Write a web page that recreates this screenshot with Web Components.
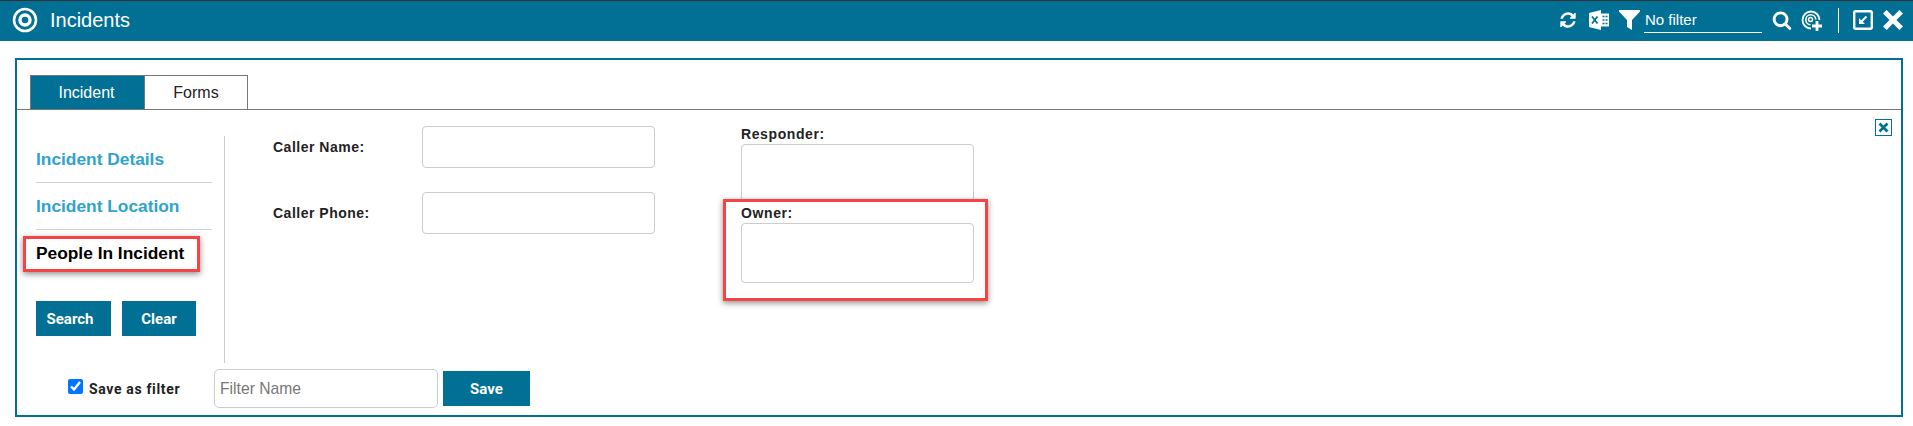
<!DOCTYPE html>
<html>
<head>
<meta charset="utf-8">
<title>Incidents</title>
<style>
html,body{margin:0;padding:0;background:#fff;}
body{font-family:"Liberation Sans",Arial,sans-serif;color:#222;overflow:hidden;}
</style>
</head>
<body>
<app-header title-text="Incidents" filter-text="No filter"></app-header>
<incident-panel>
  <tab-bar slot="tabs"></tab-bar>
  <side-nav slot="nav"></side-nav>
  <form-col slot="form-left">
    <inline-field label="Caller Name:"></inline-field>
    <inline-field label="Caller Phone:"></inline-field>
  </form-col>
  <stack-col slot="form-right"></stack-col>
  <save-row slot="footer"></save-row>
</incident-panel>

<script>
//shared colour for bars and buttons
var TEAL = "#026f94";

var icons = {
  target: `<svg width="26" height="26" viewBox="0 0 26 26" fill="none" stroke="#fff"><circle cx="13" cy="13" r="11" stroke-width="2.6"/><circle cx="13" cy="13" r="5" stroke-width="3.4"/></svg>`,
  sync: `<svg width="18" height="18" viewBox="0 0 1792 1792" fill="#fff"><path d="M1639 1056q0 5-1 7-64 268-268 434.500t-478 166.500q-146 0-282.500-55t-243.500-157l-129 129q-19 19-45 19t-45-19-19-45v-448q0-26 19-45t45-19h448q26 0 45 19t19 45-19 45l-137 137q71 66 161 102t187 36q134 0 250-65t186-179q11-17 53-117 8-23 30-23h192q13 0 22.500 9.500t9.500 22.500zm25-800v448q0 26-19 45t-45 19h-448q-26 0-45-19t-19-45 19-45l138-138q-148-137-349-137-134 0-250 65t-186 179q-11 17-53 117-8 23-30 23h-199q-13 0-22.500-9.500t-9.500-22.500v-7q65-268 270-434.500t480-166.500q146 0 284 55.500t245 156.500l130-129q19-19 45-19t45 19 19 45z"/></svg>`,
  excel: `<svg width="20" height="20" viewBox="0 0 20 20"><path d="M0 3 L12 0 V20 L0 17Z" fill="#fff"/><path d="M12 3.500H20V16.500H12Z" fill="#fff"/><path d="M3 6.500 L8.500 13.500 M8.500 6.500 L3 13.500" stroke="#026f94" stroke-width="1.8"/><path d="M13.500 6.500H15.500M16.500 6.500H18.500M13.500 10H15.500M16.500 10H18.500M13.500 13.500H15.500M16.500 13.500H18.500" stroke="#026f94" stroke-width="1.500"/></svg>`,
  funnel: `<svg width="21" height="20" viewBox="0 0 21 20" fill="#fff"><path d="M0 0H21V1.500L13 10V20L8 17V10L0 1.500Z"/></svg>`,
  search: `<svg width="20" height="20" viewBox="0 0 1792 1792" fill="#fff"><path d="M1216 832q0-185-131.500-316.500t-316.500-131.500-316.500 131.500-131.500 316.500 131.500 316.500 316.500 131.500 316.500-131.500 131.500-316.500zm512 832q0 52-38 90t-90 38q-54 0-90-38l-343-342q-179 124-399 124-143 0-273.500-55.500t-225-150-150-225-55.500-273.500 55.500-273.500 150-225 225-150 273.500-55.500 273.500 55.500 225 150 150 225 55.500 273.500q0 220-124 399l343 343q37 37 37 90z"/></svg>`,
  targetAdd: `<svg width="21" height="21" viewBox="0 0 21 21" fill="none" stroke="#fff"><path d="M10 18.500A8.500 8.500 0 1 1 18.500 10" stroke-width="1.800"/><path d="M9.500 14.800A5 5 0 1 1 14.800 9.500" stroke-width="1.600"/><circle cx="9.500" cy="9.500" r="2" stroke-width="1.500"/><path d="M16 11V21M11 16H21" stroke-width="2.800"/></svg>`,
  collapse: `<svg width="20" height="20" viewBox="0 0 20 20" fill="none" stroke="#fff"><rect x="1.200" y="1.200" width="17.600" height="17.600" rx="1.500" stroke-width="2.400"/><path d="M13.500 6.500 L7.500 12.500" stroke-width="2"/><path d="M6 8V14H12Z" fill="#fff" stroke="none"/></svg>`,
  close: `<svg width="20" height="20" viewBox="0 0 20 20" fill="none" stroke="#fff"><path d="M1.800 1.800 L18.200 18.200 M18.200 1.800 L1.800 18.200" stroke-width="5"/></svg>`
};

//TOP BAR
var template_header = document.createElement("template");
template_header.innerHTML = `
<style>
:host{display:flex;align-items:center;box-sizing:border-box;height:41px;background:${TEAL};border-top:1px solid #333;color:#fff;padding:0 10px 2px 12px;font-family:"Liberation Sans",Arial,sans-serif;}
#logo{display:flex;margin-right:12px;}
#title{font-size:20px;flex:1;}
.ico{display:flex;}
#sync{margin-right:12px;}
#excel{margin-right:10px;}
#funnel{margin-right:4px;}
#filter{box-sizing:border-box;width:118px;height:23px;border-bottom:1px solid #fff;font-size:15px;line-height:19px;padding-left:1px;margin-right:10px;margin-top:2px;}
#search{margin-right:9px;}
#sep{width:1px;height:25px;background:#fff;margin:0 14px 0 16px;}
#collapse{margin-right:10px;}
</style>
<span id="logo">${icons.target}</span>
<span id="title"></span>
<span class="ico" id="sync">${icons.sync}</span>
<span class="ico" id="excel">${icons.excel}</span>
<span class="ico" id="funnel">${icons.funnel}</span>
<span id="filter"></span>
<span class="ico" id="search">${icons.search}</span>
<span class="ico" id="add">${icons.targetAdd}</span>
<span id="sep"></span>
<span class="ico" id="collapse">${icons.collapse}</span>
<span class="ico" id="close">${icons.close}</span>
`;
class AppHeader extends HTMLElement {
  constructor(){
    super();
    this.attachShadow({mode:"open"});
  }
  connectedCallback(){
    this.shadowRoot.appendChild(template_header.content.cloneNode(true));
    this.shadowRoot.querySelector("#title").innerText = this.getAttribute("title-text");
    this.shadowRoot.querySelector("#filter").innerText = this.getAttribute("filter-text");
  }
}
customElements.define("app-header", AppHeader);

//MAIN PANEL
var template_panel = document.createElement("template");
template_panel.innerHTML = `
<style>
:host{display:block;box-sizing:border-box;margin:17px 10px 0 15px;height:359px;border:2px solid ${TEAL};padding-top:15px;}
#tabs{display:block;}
#body{display:flex;border-top:1px solid #777;height:253px;box-sizing:border-box;}
#x{margin:9px 9px 0 auto;width:17px;height:17px;box-sizing:border-box;border:1px solid ${TEAL};display:flex;align-items:center;justify-content:center;}
</style>
<div id="tabs"><slot name="tabs"></slot></div>
<div id="body">
  <slot name="nav"></slot>
  <slot name="form-left"></slot>
  <slot name="form-right"></slot>
  <div id="x"><svg width="11" height="11" viewBox="0 0 11 11"><path d="M1.500 1.500 L9.500 9.500 M9.500 1.500 L1.500 9.500" stroke="${TEAL}" stroke-width="2.600"/></svg></div>
</div>
<slot name="footer"></slot>
`;
class IncidentPanel extends HTMLElement {
  constructor(){
    super();
    this.attachShadow({mode:"open"});
  }
  connectedCallback(){
    this.shadowRoot.appendChild(template_panel.content.cloneNode(true));
  }
}
customElements.define("incident-panel", IncidentPanel);

//TABS
var template_tabs = document.createElement("template");
template_tabs.innerHTML = `
<style>
:host{display:flex;padding-left:13px;height:34px;font-family:"Liberation Sans",Arial,sans-serif;}
.tab{box-sizing:border-box;height:34px;border:1px solid #777;border-bottom:0;font-size:16px;display:flex;align-items:center;justify-content:center;}
#a{width:115px;background:${TEAL};color:#fff;padding-right:2px;}
#b{width:103px;background:#fff;color:#222;border-left:0;}
</style>
<div class="tab" id="a">Incident</div>
<div class="tab" id="b">Forms</div>
`;
class TabBar extends HTMLElement {
  constructor(){
    super();
    this.attachShadow({mode:"open"});
  }
  connectedCallback(){
    this.shadowRoot.appendChild(template_tabs.content.cloneNode(true));
  }
}
customElements.define("tab-bar", TabBar);

//LEFT NAV
var template_nav = document.createElement("template");
template_nav.innerHTML = `
<style>
:host{display:block;box-sizing:border-box;width:208px;height:227px;margin-top:26px;padding-left:19px;padding-right:12px;border-right:1px solid #ccc;font-family:"Liberation Sans",Arial,sans-serif;}
.item{height:46px;line-height:46px;font-size:17.33px;font-weight:bold;color:#2ea3cf;border-bottom:1px solid #d4d0d4;white-space:nowrap;}
#current{position:relative;color:#000;border-bottom:0;}
#mark{position:absolute;left:-13px;top:6px;width:177px;height:36px;box-sizing:border-box;border:3px solid #f44444;box-shadow:0 2px 6px rgba(0,0,0,.45);}
#btns{display:flex;gap:11px;margin-top:25px;}
.btn{box-sizing:border-box;height:35px;background:${TEAL};color:#fff;font:bold 15px Roboto,"Liberation Sans",sans-serif;display:flex;align-items:center;justify-content:center;}
#s{width:75px;padding-right:7px;}
#c{width:74px;}
</style>
<div class="item">Incident Details</div>
<div class="item">Incident Location</div>
<div class="item" id="current">People In Incident<div id="mark"></div></div>
<div id="btns"><div class="btn" id="s">Search</div><div class="btn" id="c">Clear</div></div>
`;
class SideNav extends HTMLElement {
  constructor(){
    super();
    this.attachShadow({mode:"open"});
  }
  connectedCallback(){
    this.shadowRoot.appendChild(template_nav.content.cloneNode(true));
  }
}
customElements.define("side-nav", SideNav);

//CALLER COLUMN
var template_col = document.createElement("template");
template_col.innerHTML = `
<style>
:host{display:flex;flex-direction:column;gap:24px;padding:16px 0 0 48px;}
</style>
<slot></slot>
`;
class FormCol extends HTMLElement {
  constructor(){
    super();
    this.attachShadow({mode:"open"});
  }
  connectedCallback(){
    this.shadowRoot.appendChild(template_col.content.cloneNode(true));
  }
}
customElements.define("form-col", FormCol);

var template_field = document.createElement("template");
template_field.innerHTML = `
<style>
:host{display:flex;align-items:center;height:42px;font:bold 14px "Liberation Sans",Arial,sans-serif;letter-spacing:.5px;color:#222;}
#l{width:149px;}
#i{box-sizing:border-box;width:233px;height:42px;border:1px solid #ccc;border-radius:4px;background:#fff;}
</style>
<span id="l"></span><div id="i"></div>
`;
class InlineField extends HTMLElement {
  constructor(){
    super();
    this.attachShadow({mode:"open"});
  }
  connectedCallback(){
    this.shadowRoot.appendChild(template_field.content.cloneNode(true));
    this.shadowRoot.querySelector("#l").innerText = this.getAttribute("label");
  }
}
customElements.define("inline-field", InlineField);

//RESPONDER + OWNER COLUMN
var template_stack = document.createElement("template");
template_stack.innerHTML = `
<style>
:host{display:block;padding:16px 0 0 86px;font:bold 14px "Liberation Sans",Arial,sans-serif;letter-spacing:.6px;color:#222;}
.lab{height:18px;line-height:16px;}
.box{box-sizing:border-box;width:233px;border:1px solid #ccc;border-radius:4px;background:#fff;}
#r{height:58px;margin-bottom:3px;}
#o{height:60px;}
#wrap{position:relative;}
#mark{position:absolute;left:-18px;top:-6px;width:265px;height:102px;box-sizing:border-box;border:3px solid #f44444;box-shadow:0 2px 6px rgba(0,0,0,.45);}
</style>
<div class="lab">Responder:</div>
<div class="box" id="r"></div>
<div id="wrap">
  <div class="lab">Owner:</div>
  <div class="box" id="o"></div>
  <div id="mark"></div>
</div>
`;
class StackCol extends HTMLElement {
  constructor(){
    super();
    this.attachShadow({mode:"open"});
  }
  connectedCallback(){
    this.shadowRoot.appendChild(template_stack.content.cloneNode(true));
  }
}
customElements.define("stack-col", StackCol);

//SAVE FILTER ROW
var template_save = document.createElement("template");
template_save.innerHTML = `
<style>
:host{display:flex;align-items:center;height:39px;margin-top:7px;padding-left:51px;font-family:"Liberation Sans",Arial,sans-serif;}
#cb{width:15px;height:15px;margin:0 6px 4px 0;accent-color:#0075ff;}
#lab{font:bold 14px Roboto,"Liberation Sans",sans-serif;letter-spacing:.65px;color:#222;width:125px;white-space:nowrap;}
#name{box-sizing:border-box;width:224px;height:39px;border:1px solid #ccc;border-radius:5px;padding:0 5px;font:15.7px "Liberation Sans",Arial,sans-serif;outline:0;}
#name::placeholder{color:#777;opacity:1;}
#go{margin-left:5px;width:87px;height:35px;background:${TEAL};color:#fff;font:bold 15px Roboto,"Liberation Sans",sans-serif;display:flex;align-items:center;justify-content:center;}
</style>
<input id="cb" type="checkbox" checked>
<span id="lab">Save as filter</span>
<input id="name" placeholder="Filter Name">
<div id="go">Save</div>
`;
class SaveRow extends HTMLElement {
  constructor(){
    super();
    this.attachShadow({mode:"open"});
  }
  connectedCallback(){
    this.shadowRoot.appendChild(template_save.content.cloneNode(true));
  }
}
customElements.define("save-row", SaveRow);
</script>
</body>
</html>
